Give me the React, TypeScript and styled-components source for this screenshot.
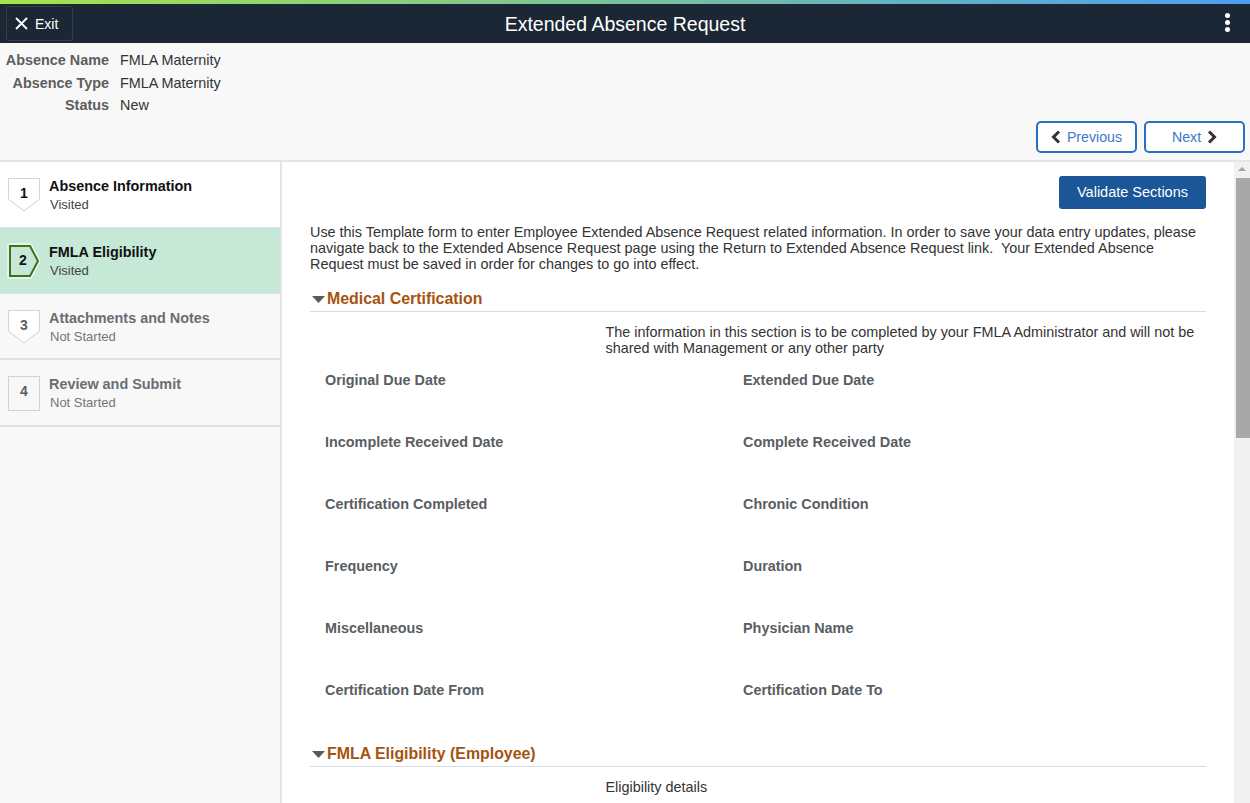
import React from 'react';
import styled, { createGlobalStyle } from 'styled-components';

const Global = createGlobalStyle`
  html, body { margin: 0; padding: 0; height: 100%; overflow: hidden; }
  body { font-family: "Liberation Sans", Arial, sans-serif; background: #fff; }
  #root { height: 100%; }
`;

const Page = styled.div`
  width: 1250px;
  height: 803px;
  display: flex;
  flex-direction: column;
  overflow: hidden;
`;

const TopStripe = styled.div`
  height: 4px;
  flex: none;
  background: linear-gradient(90deg, #a6e34a 0%, #4d9ff0 100%);
`;

const Banner = styled.header`
  height: 39px;
  flex: none;
  background: #1c2735;
  display: flex;
  align-items: center;
  justify-content: space-between;
  padding: 0 20px 0 6px;
  position: relative;
`;

const ExitButton = styled.button`
  width: 67px;
  height: 35px;
  box-sizing: border-box;
  background: transparent;
  border: 1px solid #333e4c;
  border-radius: 3px;
  color: #fff;
  font: 14px "Liberation Sans", Arial, sans-serif;
  display: flex;
  align-items: center;
  gap: 7px;
  padding: 0 0 0 8px;
`;

const BannerTitle = styled.h1`
  position: absolute;
  left: 0;
  right: 0;
  top: 0;
  margin: 0;
  text-align: center;
  line-height: 40px;
  font-size: 19.5px;
  font-weight: 400;
  color: #fff;
  pointer-events: none;
`;

const MoreDots = styled.div`
  display: flex;
  flex-direction: column;
  gap: 2px;
  margin-top: -3px;
`;

const Dot = styled.span`
  width: 5px;
  height: 5px;
  border-radius: 50%;
  background: #fff;
`;

const InfoBar = styled.section`
  height: 119px;
  flex: none;
  box-sizing: border-box;
  background: #f8f8f8;
  border-bottom: 2px solid #e2e5e9;
  position: relative;
  padding-top: 6px;
`;

const InfoGrid = styled.dl`
  margin: 0;
  display: grid;
  grid-template-columns: 109px auto;
  column-gap: 11px;
  justify-content: start;
  font-size: 14.4px;
  line-height: 22.5px;
`;

const InfoLabel = styled.dt`
  text-align: right;
  font-weight: 700;
  color: #5d5d5d;
`;

const InfoValue = styled.dd`
  margin: 0;
  color: #333;
`;

const NavButtons = styled.div`
  position: absolute;
  right: 5px;
  top: 78px;
  display: flex;
  gap: 7px;
`;

const NavButton = styled.button`
  width: 101px;
  height: 32px;
  box-sizing: border-box;
  background: #fff;
  border: 2px solid #2a6fc4;
  border-radius: 5px;
  color: #3c78c8;
  font: 14.2px "Liberation Sans", Arial, sans-serif;
  display: flex;
  align-items: center;
  justify-content: center;
  gap: 6px;
  padding: 0;
`;

const Body = styled.div`
  flex: 1;
  min-height: 0;
  display: flex;
`;

const Sidebar = styled.nav`
  width: 282px;
  flex: none;
  box-sizing: border-box;
  background: #f8f8f8;
  border-right: 2px solid #e2e5e9;
`;

const Step = styled.div<{ $state: 'visited' | 'current' | 'todo'; $h: number }>`
  height: ${p => p.$h}px;
  box-sizing: border-box;
  padding-top: 15px;
  display: flex;
  align-items: flex-start;
  border-bottom: ${p => (p.$state === 'todo' ? '2px solid #dfe3e8' : '1px solid #dfe3e8')};
  background: ${p => (p.$state === 'visited' ? '#fff' : p.$state === 'current' ? '#c6e8d6' : 'transparent')};
`;

const StepBadge = styled.div`
  width: 34px;
  height: 37px;
  margin-left: 7px;
  margin-right: 8px;
  flex: none;
`;

const BadgeDigit = styled.text`
  font: 700 14px "Liberation Sans", Arial, sans-serif;
`;

const StepTitle = styled.div<{ $muted: boolean }>`
  font-size: 14.4px;
  font-weight: 700;
  line-height: 19px;
  color: ${p => (p.$muted ? '#696d73' : '#111')};
`;

const StepSub = styled.div<{ $muted: boolean }>`
  font-size: 13px;
  line-height: 17px;
  margin-left: 1px;
  color: ${p => (p.$muted ? '#72767c' : '#444')};
`;

const Content = styled.main`
  flex: 1;
  min-width: 0;
  position: relative;
  overflow: hidden;
  padding: 14px 44px 0 28px;
`;

const ValidateRow = styled.div`
  display: flex;
  justify-content: flex-end;
`;

const ValidateButton = styled.button`
  width: 147px;
  height: 33px;
  background: #1b5699;
  border: 0;
  border-radius: 3px;
  color: #fff;
  font: 14.5px "Liberation Sans", Arial, sans-serif;
  padding: 0 0 2px;
`;

const Intro = styled.p`
  margin: 15px 0 0;
  font-size: 14.4px;
  line-height: 16px;
  color: #333;
  white-space: pre-wrap;
`;

const SectionHead = styled.div<{ $top: number }>`
  margin-top: ${p => p.$top}px;
  height: 23px;
  box-sizing: border-box;
  display: flex;
  align-items: center;
  gap: 2px;
  border-bottom: 1px solid #d8dde3;
  padding: 1px 0 3px 2px;
  color: #a5530f;
  font-size: 15.9px;
  font-weight: 700;
`;

const Note = styled.p`
  margin: 12px 0 0 295.5px;
  font-size: 14.4px;
  line-height: 16px;
  color: #333;
`;

const Fields = styled.div`
  margin: 15.5px 0 0 15px;
  display: grid;
  grid-template-columns: 418px 1fr;
  grid-auto-rows: 62.1px;
`;

const FieldLabel = styled.div`
  font-size: 14.4px;
  font-weight: 700;
  line-height: 17px;
  color: #5a5d62;
`;

const ScrollTrack = styled.div`
  position: absolute;
  top: 0;
  right: 0;
  bottom: 0;
  width: 16px;
  background: #f1f1f1;
`;

const ScrollArrow = styled.div`
  position: absolute;
  top: 5px;
  left: 4px;
  width: 0;
  height: 0;
  border-left: 4px solid transparent;
  border-right: 4px solid transparent;
  border-bottom: 4px solid #a3a3a3;
`;

const ScrollThumb = styled.div`
  position: absolute;
  top: 16px;
  left: 2px;
  width: 14px;
  height: 260px;
  background: #a8a8a8;
`;

const steps = [
  { n: 1, title: 'Absence Information', sub: 'Visited', state: 'visited', h: 66, shape: 'pent' },
  { n: 2, title: 'FMLA Eligibility', sub: 'Visited', state: 'current', h: 66, shape: 'arrow' },
  { n: 3, title: 'Attachments and Notes', sub: 'Not Started', state: 'todo', h: 66, shape: 'pent' },
  { n: 4, title: 'Review and Submit', sub: 'Not Started', state: 'todo', h: 67, shape: 'square' },
] as const;

const fields = [
  'Original Due Date', 'Extended Due Date',
  'Incomplete Received Date', 'Complete Received Date',
  'Certification Completed', 'Chronic Condition',
  'Frequency', 'Duration',
  'Miscellaneous', 'Physician Name',
  'Certification Date From', 'Certification Date To',
];

const Badge = ({ n, shape }: { n: number; shape: 'pent' | 'arrow' | 'square' }) => (
  <StepBadge>
    <svg width="34" height="37" viewBox="0 0 34 37">
      {shape === 'pent' && (
        <path d="M1.5 1.5H32.5V22L17 34L1.5 22Z" fill="#fff" stroke="#d3d3d3" strokeWidth="1" />
      )}
      {shape === 'square' && <rect x="1.5" y="1.5" width="31" height="34" fill="none" stroke="#cfd2d6" />}
      {shape === 'arrow' && (
        <path d="M1 1H24L33 18L24 35H1Z" fill="#c6e8d6" stroke="#fff" strokeWidth="1" />
      )}
      {shape === 'arrow' && (
        <path d="M3 3H23L31 18L23 33H3Z" fill="#c6e8d6" stroke="#44701c" strokeWidth="2" />
      )}
      <BadgeDigit
        x={shape === 'arrow' ? 16 : 17}
        y={shape === 'arrow' ? 22 : 20.5}
        textAnchor="middle"
        fill={n > 2 ? '#5a5d62' : '#111'}
      >
        {n}
      </BadgeDigit>
    </svg>
  </StepBadge>
);

const Caret = () => (
  <svg width="13" height="7" viewBox="0 0 13 7">
    <path d="M0 0H13L6.5 7Z" fill="#5a5a5a" />
  </svg>
);

const Chevron = ({ dir }: { dir: 'l' | 'r' }) => (
  <svg width="10" height="14" viewBox="0 0 10 14">
    <path
      d={dir === 'l' ? 'M8 1.5L2.5 7L8 12.5' : 'M2 1.5L7.5 7L2 12.5'}
      fill="none"
      stroke="#333"
      strokeWidth="3"
    />
  </svg>
);

export default function App() {
  return (
    <Page>
      <Global />
      <TopStripe />
      <Banner>
        <ExitButton>
          <svg width="13" height="13" viewBox="0 0 13 13">
            <path d="M1 1L12 12M12 1L1 12" stroke="#fff" strokeWidth="1.8" fill="none" />
          </svg>
          Exit
        </ExitButton>
        <BannerTitle>Extended Absence Request</BannerTitle>
        <MoreDots>
          <Dot />
          <Dot />
          <Dot />
        </MoreDots>
      </Banner>
      <InfoBar>
        <InfoGrid>
          <InfoLabel>Absence Name</InfoLabel>
          <InfoValue>FMLA Maternity</InfoValue>
          <InfoLabel>Absence Type</InfoLabel>
          <InfoValue>FMLA Maternity</InfoValue>
          <InfoLabel>Status</InfoLabel>
          <InfoValue>New</InfoValue>
        </InfoGrid>
        <NavButtons>
          <NavButton>
            <Chevron dir="l" />
            Previous
          </NavButton>
          <NavButton>
            Next
            <Chevron dir="r" />
          </NavButton>
        </NavButtons>
      </InfoBar>
      <Body>
        <Sidebar>
          {steps.map(s => (
            <Step key={s.n} $state={s.state} $h={s.h}>
              <Badge n={s.n} shape={s.shape} />
              <div>
                <StepTitle $muted={s.state === 'todo'}>{s.title}</StepTitle>
                <StepSub $muted={s.state === 'todo'}>{s.sub}</StepSub>
              </div>
            </Step>
          ))}
        </Sidebar>
        <Content>
          <ValidateRow>
            <ValidateButton>Validate Sections</ValidateButton>
          </ValidateRow>
          <Intro>
            {'Use this Template form to enter Employee Extended Absence Request related information. In order to save your data entry updates, please navigate back to the Extended Absence Request page using the Return to Extended Absence Request link.  Your Extended Absence Request must be saved in order for changes to go into effect.'}
          </Intro>
          <SectionHead $top={17}>
            <Caret />
            Medical Certification
          </SectionHead>
          <Note>
            The information in this section is to be completed by your FMLA Administrator and will not be shared with Management or any other party
          </Note>
          <Fields>
            {fields.map(f => (
              <FieldLabel key={f}>{f}</FieldLabel>
            ))}
          </Fields>
          <SectionHead $top={0}>
            <Caret />
            FMLA Eligibility (Employee)
          </SectionHead>
          <Note>Eligibility details</Note>
          <ScrollTrack>
            <ScrollArrow />
            <ScrollThumb />
          </ScrollTrack>
        </Content>
      </Body>
    </Page>
  );
}
